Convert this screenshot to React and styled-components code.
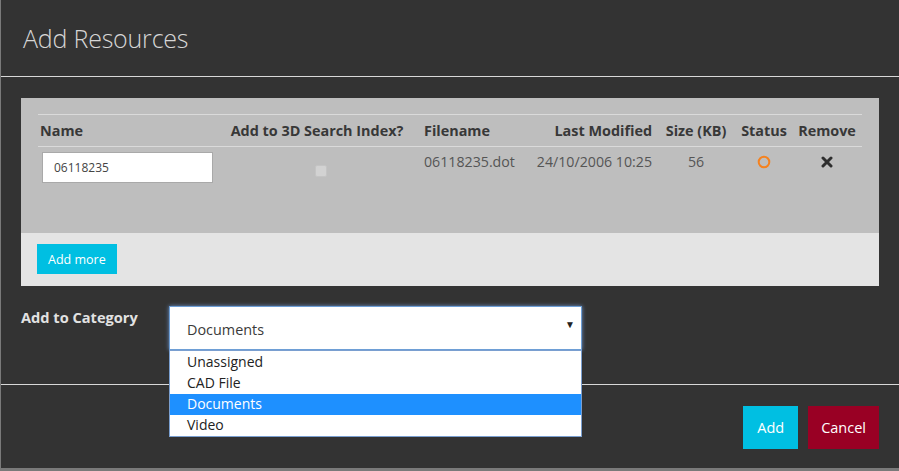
import React from "react";
import styled, { createGlobalStyle } from "styled-components";

// STYLES
const Global = createGlobalStyle`
  html, body {
    margin: 0;
    padding: 0;
    background: #7a7a7a;
    font-family: "Open Sans", "Noto Sans", sans-serif;
  }
`;

const Modal = styled.div`
  margin-left: 1px;
  width: 898px;
  height: 468px;
  background: #333333;
  display: flex;
  flex-direction: column;
`;

const Header = styled.div`
  height: 76px;
  border-bottom: 1px solid #d8d8d8;
  display: flex;
  align-items: center;
  padding-left: 21px;
`;

const Title = styled.h1`
  margin: 0 0 0 1px;
  font-size: 25px;
  font-weight: 300;
  color: #d6d6d6;
  letter-spacing: -0.2px;
`;

const Body = styled.div`
  padding: 21px 20px 34px 20px;
  border-bottom: 1px solid #d8d8d8;
`;

const Panel = styled.div`
  display: flex;
  flex-direction: column;
`;

const TableArea = styled.div`
  background: #bebebe;
  height: 135px;
  padding: 16px 16px 0 17px;
  box-sizing: border-box;
`;

const Table = styled.table`
  width: 824px;
  table-layout: fixed;
  border-collapse: collapse;
`;

const Th = styled.th`
  height: 31px;
  padding: 0 ${(p) => p.$pad || "2px"};
  border-top: 1px solid #dadada;
  border-bottom: 1px solid #dadada;
  font-size: 14.4px;
  font-weight: 700;
  color: #383838;
  text-align: ${(p) => p.$align || "left"};
  white-space: nowrap;
`;

const Td = styled.td`
  padding: 5px ${(p) => p.$pad || "2px"} 0;
  vertical-align: top;
  font-size: 14.2px;
  color: #555;
  line-height: 20px;
  text-align: ${(p) => p.$align || "left"};
  white-space: nowrap;
`;

const NameInput = styled.input`
  box-sizing: border-box;
  width: 171px;
  height: 31px;
  margin-left: 2px;
  border: 1px solid #a9a9a9;
  background: #fff;
  padding: 0 11px;
  font-family: inherit;
  font-size: 12px;
  color: #444;
  outline: none;
`;

const Check = styled.span`
  display: inline-block;
  margin: 13px 0 0 8px;
  width: 10px;
  height: 10px;
  border: 1px solid #c4c4c4;
  border-radius: 2px;
  background: #d2d2d2;
`;

const IconCell = styled.span`
  display: inline-flex;
  align-items: center;
  justify-content: center;
  height: 20px;
`;

const AddMoreBar = styled.div`
  background: #e4e4e4;
  height: 53px;
  padding: 11px 16px 0;
  box-sizing: border-box;
`;

const Button = styled.button`
  border: none;
  background: ${(p) => p.$bg};
  color: #fff;
  font-family: inherit;
  font-size: ${(p) => p.$size || "14.5px"};
  height: ${(p) => p.$h};
  padding: 0 ${(p) => p.$px};
  cursor: pointer;
`;

const CategoryRow = styled.div`
  display: flex;
  margin-top: 20px;
`;

const Label = styled.div`
  width: 148px;
  padding-top: 1px;
  font-size: 14.6px;
  font-weight: 700;
  color: #e2e2e2;
`;

const SelectWrap = styled.div`
  position: relative;
  width: 413px;
`;

const SelectBox = styled.div`
  box-sizing: border-box;
  height: 44px;
  background: #fff;
  border: 1px solid #6e9fd6;
  box-shadow: 0 0 4px rgba(120, 170, 235, 0.8);
  display: flex;
  align-items: center;
  justify-content: space-between;
  padding: 2px 6px 0 17px;
  font-size: 14.4px;
  color: #3a3a3a;
`;

const Arrow = styled.span`
  font-size: 10px;
  color: #222;
  margin-top: -10px;
`;

const Options = styled.ul`
  position: absolute;
  top: 44px;
  left: 0;
  right: 0;
  margin: 0;
  padding: 1px 0 0;
  list-style: none;
  background: #fff;
  border: 1px solid #7a9fd0;
  z-index: 2;
`;

const Option = styled.li`
  height: 21px;
  line-height: 20px;
  padding-left: 17px;
  font-size: 14px;
  color: ${(p) => (p.$active ? "#fff" : "#222")};
  background: ${(p) => (p.$active ? "#1e90ff" : "#fff")};
`;

const Footer = styled.div`
  display: flex;
  justify-content: flex-end;
  gap: 10px;
  padding: 21px 20px 0;
`;

const columns = [
  { label: "Name", width: 182 },
  { label: "Add to 3D Search Index?", width: 194, align: "center" },
  { label: "Filename", width: 104, pad: "10px" },
  { label: "Last Modified", width: 138, align: "right", pad: "4px" },
  { label: "Size (KB)", width: 80, align: "center" },
  { label: "Status", width: 56, align: "center" },
  { label: "Remove", width: 70, align: "center" },
];

const categories = ["Unassigned", "CAD File", "Documents", "Video"];

const StatusIcon = () => (
  <svg width="14" height="14" viewBox="0 0 14 14">
    <circle cx="7" cy="7" r="5.3" fill="none" stroke="#f5821f" strokeWidth="2" />
  </svg>
);

const RemoveIcon = () => (
  <svg width="12" height="12" viewBox="0 0 12 12">
    <path
      d="M2 2 L10 10 M10 2 L2 10"
      stroke="#2e2e2e"
      strokeWidth="3"
      strokeLinecap="round"
    />
  </svg>
);

const App = () => {
  return (
    <>
      <Global />
      <Modal>
        <Header>
          <Title>Add Resources</Title>
        </Header>
        <Body>
          <Panel>
            <TableArea>
              <Table>
                <colgroup>
                  {columns.map((c) => (
                    <col key={c.label} style={{ width: c.width }} />
                  ))}
                </colgroup>
                <thead>
                  <tr>
                    {columns.map((c) => (
                      <Th key={c.label} $align={c.align} $pad={c.pad}>
                        {c.label}
                      </Th>
                    ))}
                  </tr>
                </thead>
                <tbody>
                  <tr>
                    <Td>
                      <NameInput defaultValue="06118235" />
                    </Td>
                    <Td $align="center">
                      <Check />
                    </Td>
                    <Td $pad="10px">06118235.dot</Td>
                    <Td $align="right" $pad="4px">
                      24/10/2006 10:25
                    </Td>
                    <Td $align="center">56</Td>
                    <Td $align="center">
                      <IconCell>
                        <StatusIcon />
                      </IconCell>
                    </Td>
                    <Td $align="center">
                      <IconCell>
                        <RemoveIcon />
                      </IconCell>
                    </Td>
                  </tr>
                </tbody>
              </Table>
            </TableArea>
            <AddMoreBar>
              <Button $bg="#00bfe2" $h="30px" $px="11px" $size="12.5px">
                Add more
              </Button>
            </AddMoreBar>
          </Panel>
          <CategoryRow>
            <Label>Add to Category</Label>
            <SelectWrap>
              <SelectBox>
                Documents
                <Arrow>▼</Arrow>
              </SelectBox>
              <Options>
                {categories.map((c) => (
                  <Option key={c} $active={c === "Documents"}>
                    {c}
                  </Option>
                ))}
              </Options>
            </SelectWrap>
          </CategoryRow>
        </Body>
        <Footer>
          <Button $bg="#00bfe2" $h="43px" $px="14px">
            Add
          </Button>
          <Button $bg="#990024" $h="43px" $px="13px">
            Cancel
          </Button>
        </Footer>
      </Modal>
    </>
  );
};

export default App;
